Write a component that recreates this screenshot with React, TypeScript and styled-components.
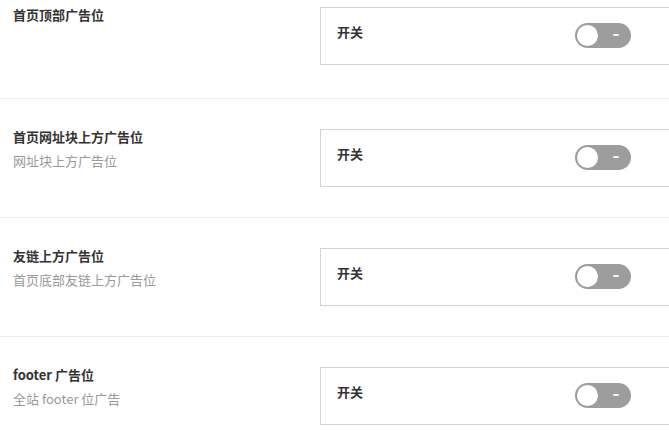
import React, { useState } from "react";
import styled, { createGlobalStyle } from "styled-components";

const GlobalStyle = createGlobalStyle`
    html, body {
        margin: 0;
        padding: 0;
        background: #ffffff;
        overflow: hidden;
    }
    body {
        font-family: "Noto Sans CJK SC", "Noto Sans", sans-serif;
    }
`;

const Page = styled.div`
    width: 680px;
`;

const Row = styled.div`
    display: flex;
    align-items: flex-start;
    padding: 30px 0;
    border-bottom: 1px solid #eeeeee;

    &:first-child {
        padding: 7px 0 33px;
    }
`;

const Info = styled.div`
    width: 307px;
    padding-left: 13px;
    display: flex;
    flex-direction: column;
`;

const Title = styled.div`
    font-size: 13px;
    line-height: 16px;
    font-weight: bold;
    color: #333333;
`;

const Desc = styled.div`
    margin-top: 8px;
    font-size: 13px;
    line-height: 16px;
    color: #999999;
`;

const Box = styled.div`
    flex: 1;
    height: 58px;
    box-sizing: border-box;
    border: 1px solid #d2d2d2;
    display: flex;
    align-items: flex-start;
    padding: 15px 48px 0 16px;
`;

const Label = styled.div`
    padding-top: 1px;
    font-size: 13px;
    line-height: 16px;
    font-weight: bold;
    color: #333333;
`;

const Switch = styled.button<{ $on: boolean }>`
    position: relative;
    margin-left: auto;
    width: 56px;
    height: 25px;
    padding: 0;
    border: none;
    border-radius: 13px;
    background: ${(p) => (p.$on ? "#5fb878" : "#9d9d9d")};
    cursor: pointer;
`;

const Knob = styled.span<{ $on: boolean }>`
    position: absolute;
    top: 2px;
    left: ${(p) => (p.$on ? "33px" : "2px")};
    width: 21px;
    height: 21px;
    border-radius: 50%;
    background: #ffffff;
    transition: left 0.2s;
`;

const Dash = styled.span<{ $on: boolean }>`
    position: absolute;
    top: 11px;
    left: ${(p) => (p.$on ? "12px" : "38px")};
    width: 6px;
    height: 2px;
    border-radius: 1px;
    background: #f4f4f4;
`;

const slots = [
    { title: "首页顶部广告位", desc: "" },
    { title: "首页网址块上方广告位", desc: "网址块上方广告位" },
    { title: "友链上方广告位", desc: "首页底部友链上方广告位" },
    { title: "footer 广告位", desc: "全站 footer 位广告" },
];

const Toggle = () => {
    const [on, setOn] = useState<boolean>(false);
    return (
        <Switch $on={on} onClick={() => setOn(!on)}>
            <Knob $on={on} />
            <Dash $on={on} />
        </Switch>
    );
};

const App = () => {
    return (
        <Page>
            <GlobalStyle />
            {slots.map((s) => (
                <Row key={s.title}>
                    <Info>
                        <Title>{s.title}</Title>
                        {s.desc && <Desc>{s.desc}</Desc>}
                    </Info>
                    <Box>
                        <Label>开关</Label>
                        <Toggle />
                    </Box>
                </Row>
            ))}
        </Page>
    );
};

export default App;
